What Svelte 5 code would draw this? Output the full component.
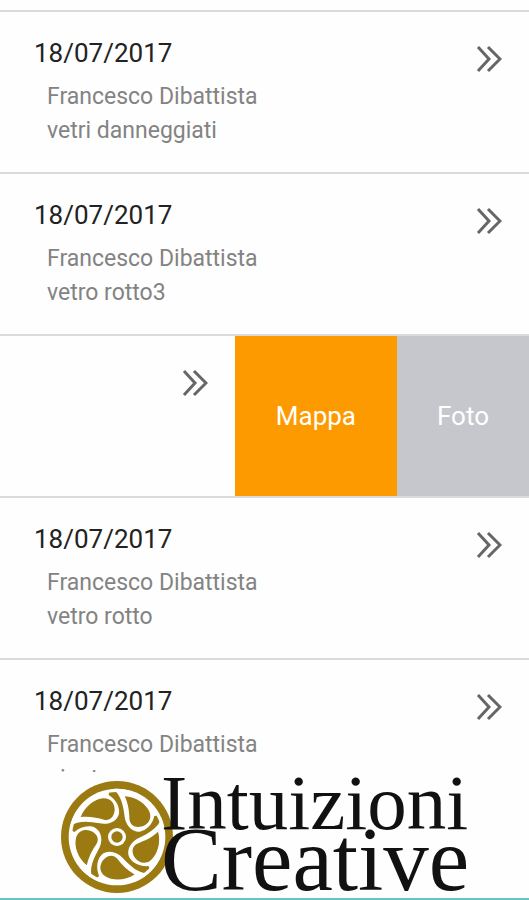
<script>
  const reports = [
    { date: "18/07/2017", name: "Francesco Dibattista", note: "vetri danneggiati" },
    { date: "18/07/2017", name: "Francesco Dibattista", note: "vetro rotto3" },
    { date: "18/07/2017", name: "Francesco Dibattista", note: "vetro rotto", swiped: true },
    { date: "18/07/2017", name: "Francesco Dibattista", note: "vetro rotto" },
    { date: "18/07/2017", name: "Francesco Dibattista", note: "pianta" }
  ];

  const blades = [0, 72, 144, 216, 288];
</script>

<div class="app">
  <main>
    <ul>
      {#each reports as report}
        <li class:swiped={report.swiped}>
          <div class="report">
            {#if !report.swiped}
              <div class="text">
                <h2>{report.date}</h2>
                <p>{report.name}</p>
                <p>{report.note}</p>
              </div>
            {/if}
            <button class="more" aria-label="Apri">
              <svg viewBox="0 0 26 28" width="26" height="28">
                <path d="M2 2 L13 14 L2 26 M12 2 L24 14 L12 26" />
              </svg>
            </button>
          </div>
          {#if report.swiped}
            <button class="action map">Mappa</button>
            <button class="action photo">Foto</button>
          {/if}
        </li>
      {/each}
    </ul>
  </main>

  <footer>
    <svg class="wheel" viewBox="35 48 336 336" width="112" height="112" aria-hidden="true">
      <circle class="gold" cx="203" cy="216" r="168" />
      <circle class="white" cx="203" cy="216" r="145" />
      <circle class="gold" cx="203" cy="216" r="135" />
      {#each blades as angle}
        <g transform="rotate({angle} 203 216)">
          <path
            class="white"
            d="M62 184 C85 165 120 169 150 175 C178 181 204 168 209 146 C212 124 198 102 178 90 L180 76 A142 142 0 0 0 62 184 Z"
          />
          <path
            class="gold"
            d="M94 156 C106 125 135 102 162 100 C184 99 197 116 196 136 C194 156 182 168 164 164 C144 158 120 153 94 156 Z"
          />
        </g>
      {/each}
      <circle class="white" cx="203" cy="216" r="27" />
      <circle class="gold" cx="203" cy="216" r="17" />
    </svg>
    <div class="brand">
      <span class="first">Intuizioni</span>
      <span class="second">Creative</span>
    </div>
  </footer>
</div>

<style>
  :global(body) {
    margin: 0;
    background: #fefefe;
  }

  .app {
    display: flex;
    flex-direction: column;
    height: 100vh;
    overflow: hidden;
    font-family: Roboto, sans-serif;
  }

  main {
    flex: 1;
    min-height: 0;
    overflow: hidden;
    padding-top: 10px;
  }

  ul {
    list-style: none;
    margin: 0;
    padding: 0;
  }

  li {
    display: flex;
    box-sizing: border-box;
    height: 162px;
    border-top: 2px solid #dadada;
  }

  .report {
    flex: 1;
    display: flex;
    justify-content: space-between;
    align-items: flex-start;
    padding: 25px 27px 0 34px;
  }

  .swiped .report {
    justify-content: flex-end;
  }

  h2 {
    margin: 0 0 11px;
    font-size: 26px;
    line-height: 32px;
    font-weight: 400;
    color: #222;
  }

  p {
    margin: 0 0 0 13px;
    font-size: 23px;
    line-height: 34px;
    color: #838383;
  }

  button {
    border: 0;
    padding: 0;
    font-family: inherit;
    cursor: pointer;
  }

  .more {
    margin-top: 8px;
    background: none;
  }

  .more svg {
    display: block;
    fill: none;
    stroke: #666;
    stroke-width: 3;
  }

  .action {
    padding: 0 40px;
    font-size: 26px;
    color: #fff;
  }

  .map {
    padding: 0 41px;
    background: #fc9a00;
  }

  .photo {
    background: #c5c7cc;
  }

  footer {
    display: flex;
    box-sizing: border-box;
    height: 128px;
    padding: 9px 0 0 61px;
    border-bottom: 2px solid #6cc0c8;
    background: #fefefe;
  }

  .wheel {
    flex: none;
  }

  .gold {
    fill: #9c7a12;
  }

  .white {
    fill: #fff;
  }

  .brand {
    display: flex;
    flex-direction: column;
    margin-left: -12px;
    font-family: "Liberation Serif", serif;
    color: #111;
  }

  .first {
    font-size: 79px;
    line-height: 44px;
  }

  .second {
    font-size: 91px;
    line-height: 70px;
  }
</style>
